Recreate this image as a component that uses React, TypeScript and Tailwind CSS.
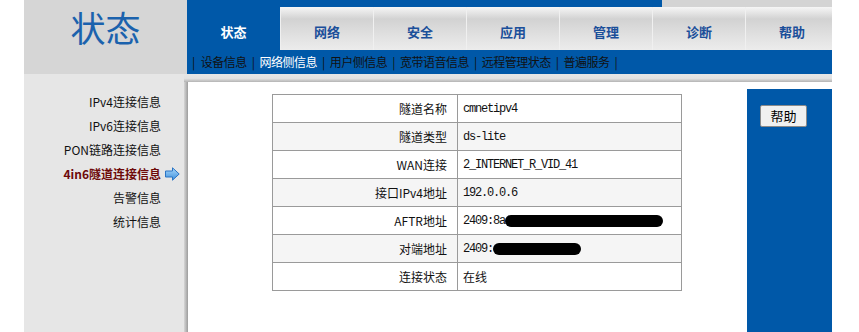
import React from 'react';

const TABS = ['状态', '网络', '安全', '应用', '管理', '诊断', '帮助'];
const SUB = ['设备信息', '网络侧信息', '用户侧信息', '宽带语音信息', '远程管理状态', '普遍服务'];
const SIDE = ['IPv4连接信息', 'IPv6连接信息', 'PON链路连接信息', '4in6隧道连接信息', '告警信息', '统计信息'];

const mono = "font-['Liberation_Mono','Noto_Sans_CJK_SC',monospace] tracking-[-1.2px]";

const Blob = ({ w }: { w: number }) => (
  <span className="inline-block h-[12px] rounded-full bg-black align-middle" style={{ width: w }} />
);

const ROWS: [string, React.ReactNode][] = [
  ['隧道名称', <span className={mono}>cmnetipv4</span>],
  ['隧道类型', <span className={mono}>ds-lite</span>],
  ['WAN连接', <span className={mono}>2_INTERNET_R_VID_41</span>],
  ['接口IPv4地址', <span className={mono}>192.0.0.6</span>],
  ['AFTR地址', <span className="flex items-center"><span className={mono}>2409:8a</span><Blob w={158} /></span>],
  ['对端地址', <span className="flex items-center"><span className={mono}>2409:</span><Blob w={88} /></span>],
  ['连接状态', <span>在线</span>],
];

function Arrow() {
  return (
    <svg width="15" height="14" viewBox="0 0 15 14" className="ml-[4px]">
      <defs>
        <linearGradient id="ag" x1="0" y1="0" x2="0" y2="1">
          <stop offset="0" stopColor="#a9d8fb" />
          <stop offset="1" stopColor="#3d8fdc" />
        </linearGradient>
      </defs>
      <path d="M0.5 4 H7.5 V0.8 L14.2 7 L7.5 13.2 V10 H0.5 Z" fill="url(#ag)" stroke="#2a74c4" strokeWidth="1" />
    </svg>
  );
}

export default function App() {
  return (
    <div className="w-[859px] h-[332px] bg-white overflow-hidden flex font-['Noto_Sans_CJK_SC',sans-serif] text-black">
      <div className="w-[24px]" />
      <div className="w-[808px] flex flex-col">
        {/* header */}
        <div className="flex h-[74px]">
          <div className="w-[163px] bg-[#d6d6d6] flex justify-center pt-[5px]">
            <span className="text-[35px] leading-[44px] text-[#1b62ad]">状态</span>
          </div>
          <div className="w-[645px] flex flex-col overflow-hidden">
            <div className="flex h-[7px]">
              <div className="w-[475px] bg-[#0058a8]" />
              <div className="flex-1 bg-[#d4d4d4]" />
            </div>
            <div className="flex h-[43px]">
              {TABS.map((t, i) => (
                <div
                  key={t}
                  className={
                    i === 0
                      ? 'w-[93px] shrink-0 bg-[#0058a8] flex items-center justify-center pt-[7px] text-white font-bold text-[13px]'
                      : 'w-[93px] shrink-0 bg-[linear-gradient(#f6f6f6_0%,#d2d2d2_28%,#e2e2e2_70%,#ececec_100%)] border-l border-[#f0f0f0] flex items-center justify-center pt-[7px] text-[#1b4f9a] font-bold text-[13px]'
                  }
                >
                  {t}
                </div>
              ))}
            </div>
            <div className="h-[24px] bg-[#0058a8] flex items-center pl-[5px] text-[12px] tracking-[-0.5px] text-[#111]">
              <span className="mr-[6px]">|</span>
              {SUB.map((s, i) => (
                <React.Fragment key={s}>
                  <span className={i === 1 ? 'text-white' : ''}>{s}</span>
                  <span className="mx-[5px]">|</span>
                </React.Fragment>
              ))}
            </div>
          </div>
        </div>
        {/* body */}
        <div className="flex flex-1">
          <div className="w-[160px] bg-[#e6e6e6] pt-[16px] flex flex-col">
            {SIDE.map((s, i) => (
              <div key={s} className="h-[24px] flex items-center justify-end pr-[23px] text-[12px]">
                {i === 3 ? (
                  <span className="flex items-center mr-[-19px]">
                    <span className="font-bold text-[#6e0a0a]">{s}</span>
                    <Arrow />
                  </span>
                ) : (
                  <span className="text-[#111]">{s}</span>
                )}
              </div>
            ))}
          </div>
          <div className="flex-1 flex flex-col">
            <div className="h-[8px] bg-[linear-gradient(#e6e6e6_0%,#e2e2e2_55%,#b4b4b4_100%)]" />
            <div className="flex flex-1">
              <div className="w-[4px] bg-[linear-gradient(to_right,#d6d6d6,#9c9c9c)]" />
              <div className="flex-1 bg-white pl-[84px] pt-[12px]">
                <div className="w-[410px] border-l border-t border-[#9a9a9a] text-[12px]">
                  {ROWS.map(([k, v], i) => (
                    <div key={k} className={`flex h-[28px] ${i % 2 === 1 ? 'bg-[#f5f5f5]' : 'bg-white'}`}>
                      <div className="w-[185px] border-r border-b border-[#9a9a9a] flex items-center justify-end pr-[10px] text-[#111]">
                        {k}
                      </div>
                      <div className="flex-1 border-r border-b border-[#9a9a9a] flex items-center pl-[5px] text-[#111]">
                        {v}
                      </div>
                    </div>
                  ))}
                </div>
              </div>
              <div className="w-[85px] mt-[7px] bg-[#0058a8] pl-[13px] pt-[13px]">
                <button className="w-[47px] h-[22px] bg-[#f0f0f0] border border-[#8a8a8a] rounded-[2px] text-[13px] leading-none text-black">
                  帮助
                </button>
              </div>
            </div>
          </div>
        </div>
      </div>
      <div className="flex-1" />
    </div>
  );
}
